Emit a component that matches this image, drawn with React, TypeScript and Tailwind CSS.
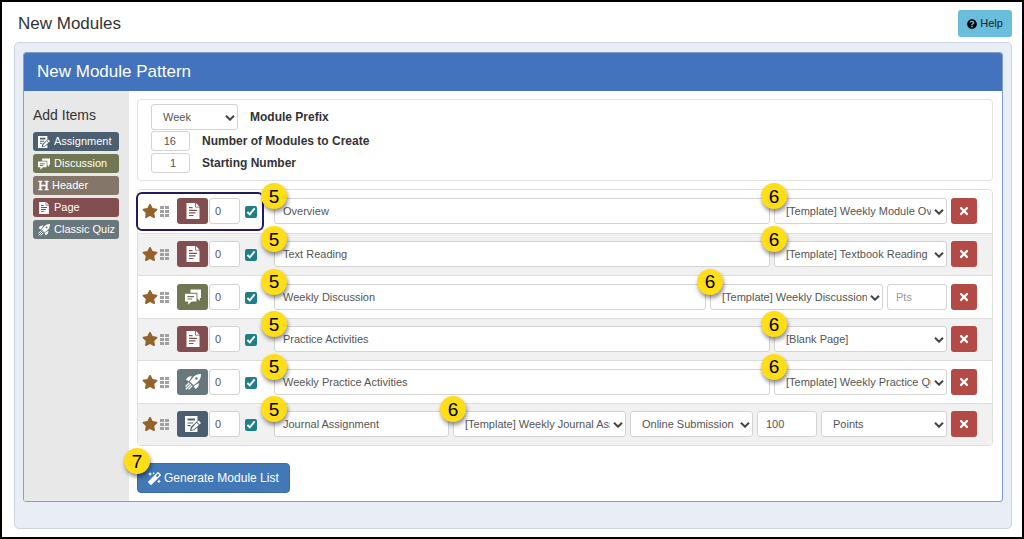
import { useState } from 'react'
import type { ReactNode } from 'react'
import { FaHeading, FaMagic, FaQuestionCircle, FaStar, FaTimes } from 'react-icons/fa'
import clsx from 'clsx'

type Kind = 'assignment' | 'discussion' | 'header' | 'page' | 'quiz'

type Extra =
  | { type: 'select'; label: string; value: string; width: string; callout?: boolean }
  | { type: 'input'; label: string; value: string; placeholder?: string }

interface Item {
  kind: Kind
  title: string
  extras: Extra[]
  highlighted?: boolean
}

const template = (value: string): Extra => ({
  type: 'select',
  label: 'Template',
  value,
  width: 'w-[173px]',
  callout: true,
})

const ITEMS: Item[] = [
  { kind: 'page', title: 'Overview', highlighted: true, extras: [template('[Template] Weekly Module Overview')] },
  { kind: 'page', title: 'Text Reading', extras: [template('[Template] Textbook Reading')] },
  {
    kind: 'discussion',
    title: 'Weekly Discussion',
    extras: [
      template('[Template] Weekly Discussion'),
      { type: 'input', label: 'Points possible', value: '', placeholder: 'Pts' },
    ],
  },
  { kind: 'page', title: 'Practice Activities', extras: [template('[Blank Page]')] },
  { kind: 'quiz', title: 'Weekly Practice Activities', extras: [template('[Template] Weekly Practice Quiz')] },
  {
    kind: 'assignment',
    title: 'Journal Assignment',
    extras: [
      template('[Template] Weekly Journal Assignment'),
      { type: 'select', label: 'Submission type', value: 'Online Submission', width: 'w-[123px]' },
      { type: 'input', label: 'Points possible', value: '100' },
      { type: 'select', label: 'Grading type', value: 'Points', width: 'w-[126px]' },
    ],
  },
]

const KIND_BG: Record<Kind, string> = {
  assignment: 'bg-[#4b5f70]',
  discussion: 'bg-[#707752]',
  header: 'bg-[#84776a]',
  page: 'bg-[#834e4f]',
  quiz: 'bg-[#67777b]',
}

const ADD_BUTTONS: { kind: Kind; label: string }[] = [
  { kind: 'assignment', label: 'Assignment' },
  { kind: 'discussion', label: 'Discussion' },
  { kind: 'header', label: 'Header' },
  { kind: 'page', label: 'Page' },
  { kind: 'quiz', label: 'Classic Quiz' },
]

const FIELD = 'rounded-[3px] border border-[#d3d3d3] bg-white text-[#555] outline-none'

function KindIcon({ kind, className }: { kind: Kind; className: string }) {
  if (kind === 'header') return <FaHeading className={className} />

  return (
    <svg viewBox="0 0 16 16" className={className} fill="currentColor" aria-hidden="true">
      {kind === 'page' && (
        <>
          <path fillRule="evenodd" d="M1.500 0h8.700v4.600h4.300V16h-13zM4 4v1.200h3.600V4zm0 2.700v1.200h8V6.700zm0 2.600v1.200h6.500V9.300zm0 2.600v1.200h4.500v-1.200z" />
          <path d="M11 0l3.500 3.700H11z" />
        </>
      )}
      {kind === 'discussion' && (
        <>
          <path d="M5.500 0.500H16v8.400h-1.200v3l-2.400-2.300V3.800H5.500z" />
          <path fillRule="evenodd" d="M0 4.800h11.500v7.600H6.600l-3.400 3.400v-3.400H0zM2.400 7v1.200h6.600V7zm0 2.400v1.200h4.600V9.400z" />
        </>
      )}
      {kind === 'assignment' && (
        <>
          <path
            fillRule="evenodd"
            d="M0 0h12.500v4.800L5.800 11 5 15l4.100-.8 3.400-3V16H0zM2.600 2.400v2.200h7.300V2.400zm0 4v1.200h5.400V6.400zm0 2.600v1.200h3V9z"
          />
          <path d="M13.600 4.600L16 7l-1.500 1.500-2.400-2.400zM11.500 6.700l2.400 2.400-5.300 4.500-2.200.5.600-2.200z" />
        </>
      )}
      {kind === 'quiz' && (
        <>
          <path
            fillRule="evenodd"
            d="M16 0c-3.700 0-6.500 1.200-8.500 4L4.800 7.400 8.600 11.200l3.400-2.700C14.800 6.500 16 3.700 16 0zm-4.600 3.200a1.300 1.300 0 1 1 0 2.600 1.300 1.300 0 0 1 0-2.600z"
          />
          <path d="M7 2.200C4 1.800 2 3.200 1 5.800l3 1.400zM13.800 9c.4 3-1 5-3.600 6l-1.400-3z" />
          <path
            d="M4.300 8.800L.6 12.500M5.800 10.200L.8 15.200M7.200 11.700l-3.700 3.700"
            stroke="currentColor"
            strokeWidth="1.300"
            fill="none"
          />
        </>
      )}
    </svg>
  )
}

function Grip() {
  return (
    <svg viewBox="0 0 9 13" className="mt-px h-[13px] w-[9px] text-[#a0a0a0]" fill="currentColor" aria-hidden="true">
      <path d="M0 1h4v3H0zM5 1h4v3H5zM0 5h4v3H0zM5 5h4v3H5zM0 9h4v3H0zM5 9h4v3H5z" />
    </svg>
  )
}

function Callout({ children }: { children: ReactNode }) {
  return (
    <span className="pointer-events-none absolute -top-[15px] left-0 z-20 flex size-[26px] -translate-x-1/2 items-center justify-center rounded-full bg-[#ffdd17] text-[19px] leading-none text-black shadow-[1px_3px_4px_rgba(0,0,0,0.45)]">
      {children}
    </span>
  )
}

function Select({ label, value, id }: { label?: string; value: string; id?: string }) {
  return (
    <>
      <select
        id={id}
        aria-label={label}
        defaultValue={value}
        className={clsx(FIELD, 'block h-[26px] w-full appearance-none pr-[15px] pl-[11px]')}
      >
        <option>{value}</option>
      </select>
      <svg
        viewBox="0 0 10 6"
        className="pointer-events-none absolute top-[11px] right-[3px] h-[6px] w-[10px] text-[#444]"
        fill="none"
        stroke="currentColor"
        strokeWidth="2"
        aria-hidden="true"
      >
        <path d="M1 0.700l4 4 4-4" />
      </svg>
    </>
  )
}

function ModuleRow({ item, onRemove }: { item: Item; onRemove: () => void }) {
  return (
    <li className="relative flex items-center border-t border-[#dedede] pr-[15px] pl-1 first:border-t-0 even:bg-[#f1f1f1]">
      {item.highlighted && (
        <div className="pointer-events-none absolute top-0.5 -left-[2px] z-10 h-[39px] w-[128px] rounded-md border-2 border-[#211c5c]" />
      )}
      <div className="flex w-[132px] shrink-0 items-center">
        <FaStar className="mr-0.5 size-4 text-[#94622b]" />
        <Grip />
        <button
          type="button"
          aria-label={item.kind}
          className={clsx(
            'ml-2 flex h-[26px] w-[31px] items-center justify-center rounded-[3px] text-white',
            KIND_BG[item.kind],
          )}
        >
          <KindIcon kind={item.kind} className="size-4" />
        </button>
        <input
          aria-label="Indent"
          defaultValue="0"
          className={clsx(FIELD, 'ml-px h-[26px] w-[31px] px-[5px]')}
        />
        <input
          type="checkbox"
          aria-label="Include"
          defaultChecked
          className="mt-0.5 ml-[5px] size-3 accent-[#1f7f87]"
        />
      </div>
      <div className="flex min-w-0 flex-1 gap-1">
        <div className="relative min-w-0 flex-1">
          <input
            aria-label="Title"
            defaultValue={item.title}
            className={clsx(FIELD, 'block h-[26px] w-full px-2')}
          />
          <Callout>5</Callout>
        </div>
        {item.extras.map((extra) =>
          extra.type === 'select' ? (
            <div key={extra.label} className={clsx('relative shrink-0', extra.width)}>
              <Select label={extra.label} value={extra.value} />
              {extra.callout && <Callout>6</Callout>}
            </div>
          ) : (
            <input
              key={extra.label}
              aria-label={extra.label}
              defaultValue={extra.value}
              placeholder={extra.placeholder}
              className={clsx(FIELD, 'h-[26px] w-[60px] shrink-0 px-2 placeholder:text-[#999]')}
            />
          ),
        )}
        <button
          type="button"
          aria-label="Remove"
          onClick={onRemove}
          className="flex size-[26px] shrink-0 items-center justify-center rounded-[3px] bg-[#b34a45] text-white"
        >
          <FaTimes className="size-3" />
        </button>
      </div>
    </li>
  )
}

function NumberSetting({ id, label, value }: { id: string; label: string; value: string }) {
  return (
    <div className="flex h-[22px] items-center gap-3">
      <input
        id={id}
        defaultValue={value}
        className={clsx(FIELD, 'h-5 w-[39px] pr-[13px] text-right')}
      />
      <label htmlFor={id} className="text-[12px] font-bold">
        {label}
      </label>
    </div>
  )
}

export default function App() {
  const [items, setItems] = useState(ITEMS)

  return (
    <main className="min-h-screen border-2 border-black bg-white px-[10px] pt-2 pb-2 pl-3 font-['Liberation_Sans',Arial,sans-serif] text-[11px] text-[#333]">
      <header className="mb-[5px] flex h-[27px] items-center justify-between">
        <h1 className="pl-1 text-[17px]">New Modules</h1>
        <button
          type="button"
          className="flex h-[27px] w-[54px] items-center justify-center gap-[3px] rounded-[3px] bg-[#6abddb] text-[#123]"
        >
          <FaQuestionCircle className="size-[10px] text-black" />
          Help
        </button>
      </header>

      <div className="rounded-[5px] border border-[#ced5e0] bg-[#e9edf6] px-2 pt-[9px] pb-[26px]">
        <section className="overflow-hidden rounded-[3px] border border-[#7f9fd0] bg-white">
          <h2 className="flex h-[38px] items-center bg-[#4273bc] pl-[13px] text-[17px] text-white">
            New Module Pattern
          </h2>
          <div className="flex">
            <aside className="w-[105px] shrink-0 bg-[#e8e8e8] pt-[14px] pr-[10px] pl-[9px]">
              <h3 className="mb-[7px] text-[14px] leading-5">Add Items</h3>
              <div className="flex flex-col gap-[3px]">
                {ADD_BUTTONS.map(({ kind, label }) => (
                  <button
                    key={kind}
                    type="button"
                    className={clsx(
                      'flex h-[19px] items-center rounded-[3px] pl-[5px] text-white',
                      kind === 'header' ? 'gap-[3px]' : 'gap-1',
                      KIND_BG[kind],
                    )}
                  >
                    <KindIcon kind={kind} className={kind === 'header' ? 'size-[11px]' : 'size-3'} />
                    {label}
                  </button>
                ))}
              </div>
            </aside>

            <div className="min-w-0 flex-1 pt-2 pr-[9px] pb-2 pl-2">
              <div className="rounded-[4px] border border-[#e2e2e2] px-[13px] pt-1 pb-1.5">
                <div className="flex items-center gap-3">
                  <div className="relative w-[87px]">
                    <Select id="prefix" value="Week" />
                  </div>
                  <label htmlFor="prefix" className="text-[12px] font-bold">
                    Module Prefix
                  </label>
                </div>
                <NumberSetting id="count" label="Number of Modules to Create" value="16" />
                <NumberSetting id="start" label="Starting Number" value="1" />
              </div>

              <ul className="mt-2 grid min-h-[257px] auto-rows-fr rounded-[4px] border border-[#dedede]">
                {items.map((item) => (
                  <ModuleRow
                    key={item.title}
                    item={item}
                    onRemove={() => setItems(items.filter((i) => i !== item))}
                  />
                ))}
              </ul>

              <div className="relative mt-[17px] w-fit">
                <button
                  type="button"
                  className="flex h-[30px] items-center gap-[3px] rounded-[4px] border border-[#3a6ca6] bg-[#4278b5] px-[10px] text-[12px] text-white"
                >
                  <FaMagic className="size-[13px]" />
                  Generate Module List
                </button>
                <Callout>7</Callout>
              </div>
            </div>
          </div>
        </section>
      </div>
    </main>
  )
}
